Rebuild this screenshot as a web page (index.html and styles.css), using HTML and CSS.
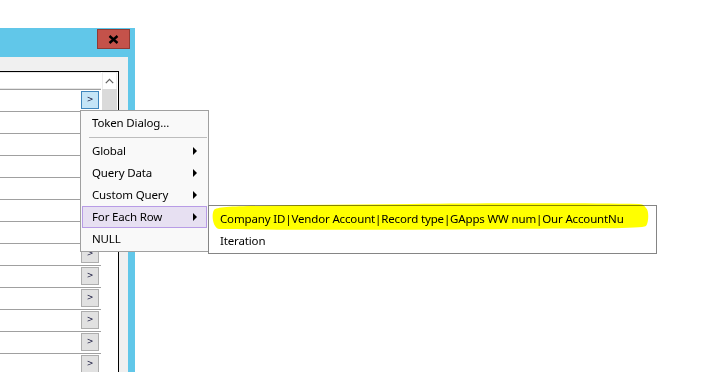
FILE: index.html
```html
<!DOCTYPE html>
<html>
<head>
<meta charset="utf-8">
<link rel="stylesheet" href="styles.css">
</head>
<body>
<div class="stage">
  <div class="window">
    <div class="titlebar">
      <div class="close-btn">
        <svg width="11" height="9" viewBox="0 0 11 9"><path d="M1.5 1 L9.5 8 M9.5 1 L1.5 8" stroke="#000" stroke-width="2.4" fill="none"/></svg>
      </div>
    </div>
    <div class="client">
      <div class="panel">
        <div class="grid-col">
          <div class="header-row"></div>
          <div class="row"><span class="cell-btn active">&gt;</span></div>
          <div class="row"><span class="cell-btn">&gt;</span></div>
          <div class="row"><span class="cell-btn">&gt;</span></div>
          <div class="row"><span class="cell-btn">&gt;</span></div>
          <div class="row"><span class="cell-btn">&gt;</span></div>
          <div class="row"><span class="cell-btn">&gt;</span></div>
          <div class="row"><span class="cell-btn">&gt;</span></div>
          <div class="row"><span class="cell-btn">&gt;</span></div>
          <div class="row"><span class="cell-btn">&gt;</span></div>
          <div class="row"><span class="cell-btn">&gt;</span></div>
          <div class="row"><span class="cell-btn">&gt;</span></div>
          <div class="row"><span class="cell-btn">&gt;</span></div>
          <div class="row"><span class="cell-btn">&gt;</span></div>
        </div>
        <div class="scroll-col">
          <div class="scroll-up">
            <svg width="9" height="6" viewBox="0 0 9 6"><path d="M0.8 5.2 L4.5 1.3 L8.2 5.2" stroke="#606060" stroke-width="1.2" fill="none"/></svg>
          </div>
          <div class="scroll-thumb"></div>
        </div>
      </div>
    </div>
  </div>

  <div class="menu context-menu">
    <div class="menu-item">Token Dialog...</div>
    <div class="menu-sep"></div>
    <div class="menu-item">Global<span class="sub-arrow"></span></div>
    <div class="menu-item">Query Data<span class="sub-arrow"></span></div>
    <div class="menu-item">Custom Query<span class="sub-arrow"></span></div>
    <div class="menu-item selected">For Each Row<span class="sub-arrow"></span></div>
    <div class="menu-item">NULL</div>
  </div>

  <div class="menu submenu">
    <div class="menu-item">Company ID|Vendor Account|Record type|GApps WW num|Our AccountNu</div>
    <div class="menu-item">Iteration</div>
  </div>

  <svg class="marker" width="442" height="30" viewBox="0 0 442 30">
    <path d="M3 8 C6 4 40 4 90 3 L200 2 C300 1 380 1 428 2 C433 2 434 5 435 6 C438 8 438 20 435 24 C430 27 380 26 300 27 C200 28 80 28 8 27 C2 26 0 13 3 8 Z" fill="#ffff00"/>
  </svg>
</div>
</body>
</html>
```

FILE: styles.css
```css
html, body {
  margin: 0;
  padding: 0;
  background: #ffffff;
}

.stage {
  position: relative;
  width: 723px;
  height: 372px;
  overflow: hidden;
  font-family: "Noto Sans", "Open Sans", sans-serif;
  font-size: 11.5px;
  letter-spacing: -0.15px;
  color: #000;
}

.window {
  margin-top: 28px;
  width: 135px;
  height: 344px;
  background: #61c7e9;
  display: flex;
  flex-direction: column;
}

.titlebar {
  height: 29px;
  flex: none;
  position: relative;
}

.close-btn {
  margin: 1px 0 0 97px;
  width: 31px;
  height: 18px;
  background: #c4524a;
  border: 1px solid #8f3a34;
  display: flex;
  align-items: center;
  justify-content: center;
}

.client {
  flex: 1;
  width: 128px;
  background: #f0f0f0;
  padding-top: 14px;
  box-sizing: border-box;
}

.panel {
  width: 118px;
  height: 100%;
  border-top: 1px solid #000;
  border-right: 1px solid #000;
  background: #fff;
  display: flex;
}

.grid-col {
  width: 101px;
  flex: none;
}

.header-row {
  height: 17px;
  border-bottom: 1px solid #a0a0a0;
  box-sizing: content-box;
  background: #fff;
  box-shadow: inset 0 1px 0 #e6e6e6, inset 0 -1px 0 #e6e6e6;
}

.row {
  height: 21px;
  border-bottom: 1px solid #a0a0a0;
  display: flex;
  justify-content: flex-end;
  align-items: flex-start;
}

.cell-btn {
  margin: 1px 2px 0 0;
  width: 18px;
  height: 18px;
  box-sizing: border-box;
  background: #e1e1e1;
  border: 1px solid #adadad;
  font-family: "DejaVu Sans", sans-serif;
  font-size: 8px;
  letter-spacing: 0;
  line-height: 16px;
  text-align: center;
  color: #1a1a40;
}

.cell-btn.active {
  background: #c5e5f7;
  border-color: #3f86bd;
}

.scroll-col {
  width: 17px;
  flex: none;
  display: flex;
  flex-direction: column;
}

.scroll-up {
  height: 17px;
  margin: 0 1px 0 1px;
  border: 1px solid #ececec;
  border-bottom: none;
  box-sizing: border-box;
  display: flex;
  align-items: center;
  justify-content: center;
}

.scroll-thumb {
  margin: 0 1px 0 1px;
  height: 115px;
  background: #dadada;
}

/* menus */
.menu {
  position: absolute;
  background: #f9f9f9;
  box-sizing: border-box;
}

.context-menu {
  left: 80px;
  top: 110px;
  width: 129px;
  height: 142px;
  border: 1px solid #a0a0a0;
  padding: 1px 1px 0 1px;
}

.menu-item {
  height: 22px;
  line-height: 22px;
  padding-left: 10px;
  position: relative;
  white-space: nowrap;
  box-sizing: border-box;
}

.menu-item.selected {
  background: #e7e0f2;
  border: 1px solid #b89ce6;
  line-height: 20px;
  padding-left: 9px;
}

.sub-arrow {
  position: absolute;
  right: 10px;
  top: 7px;
  width: 0;
  height: 0;
  border-left: 4px solid #000;
  border-top: 4px solid transparent;
  border-bottom: 4px solid transparent;
}

.menu-item.selected .sub-arrow {
  right: 9px;
  top: 6px;
}

.menu-sep {
  height: 6px;
  margin-left: 7px;
  display: flex;
  align-items: center;
}

.menu-sep::before {
  content: "";
  display: block;
  flex: 1;
  height: 1px;
  background: #bdbdbd;
}

.submenu {
  left: 208px;
  top: 205px;
  width: 449px;
  height: 49px;
  border: 1px solid #858585;
  background: #fff;
  padding: 2px 0 1px 0;
}

.submenu .menu-item {
  padding-left: 11px;
}

.marker {
  position: absolute;
  left: 211px;
  top: 202px;
  mix-blend-mode: multiply;
}
```
